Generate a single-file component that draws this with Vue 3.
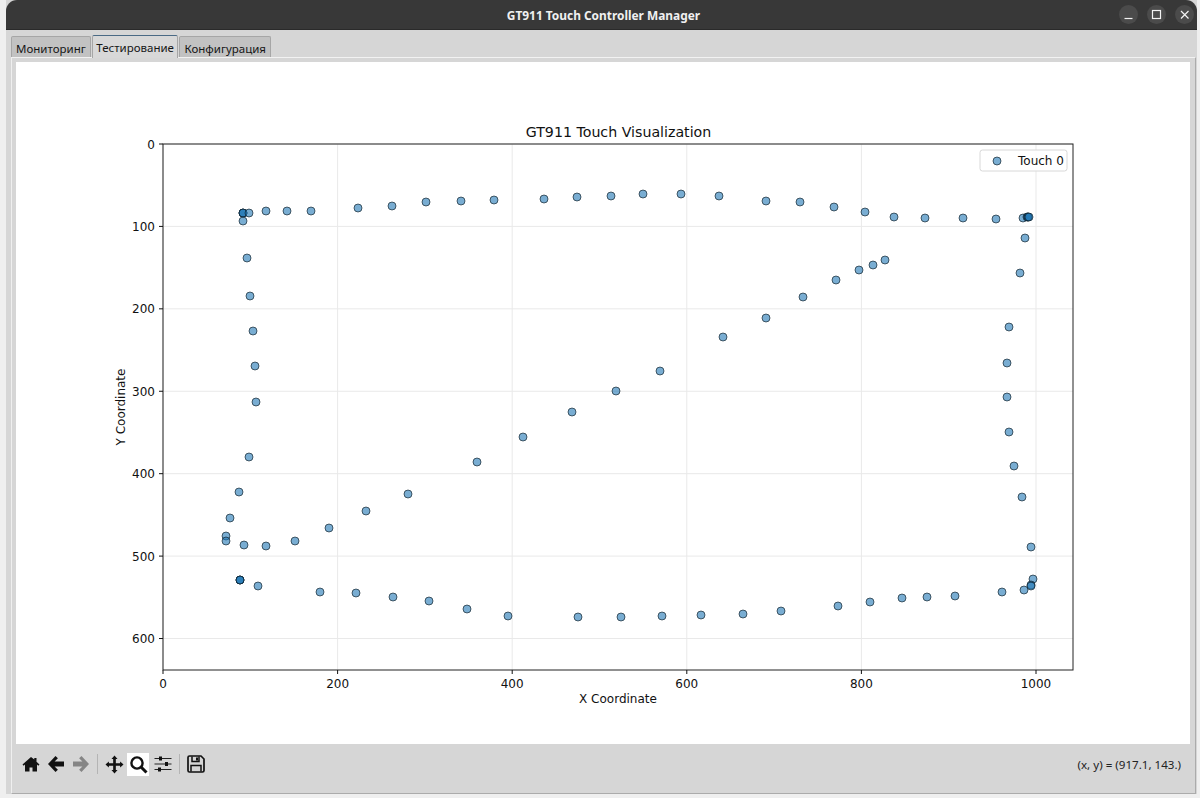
<template>
  <div class="desktop">
    <div class="window">
      <!-- Title bar -->
      <header class="titlebar">
        <span class="title">GT911 Touch Controller Manager</span>
        <div class="win-buttons">
          <button class="win-btn" aria-label="minimize">
            <svg width="12" height="12" viewBox="0 0 12 12"><path d="M1.5 9.5h8" stroke="#f2f2f2" stroke-width="1.2" /></svg>
          </button>
          <button class="win-btn" aria-label="maximize">
            <svg width="12" height="12" viewBox="0 0 12 12"><rect x="1.5" y="1.5" width="8" height="8" fill="none" stroke="#f2f2f2" stroke-width="1.2" /></svg>
          </button>
          <button class="win-btn" aria-label="close">
            <svg width="12" height="12" viewBox="0 0 12 12"><path d="M2 2l7.5 7.5M9.5 2L2 9.5" stroke="#f2f2f2" stroke-width="1.2" /></svg>
          </button>
        </div>
      </header>

      <div class="body">
        <nav class="tabs">
          <div v-for="tab in tabs" :key="tab" class="tab" :class="{ active: tab === activeTab }">{{ tab }}</div>
        </nav>

        <section class="pane">
          <div class="canvas">
            <!-- viewBox keeps plot coordinates in window pixels -->
            <svg class="plot" viewBox="16 62 1175 682" width="1175" height="682">
              <text x="618.5" y="137" class="plot-title" text-anchor="middle">GT911 Touch Visualization</text>

              <line v-for="t in xTicks" :key="'gx'+t" :x1="xPos(t)" :x2="xPos(t)" :y1="axes.top" :y2="axes.bottom" class="grid" />
              <line v-for="t in yTicks" :key="'gy'+t" :x1="axes.left" :x2="axes.right" :y1="yPos(t)" :y2="yPos(t)" class="grid" />

              <circle v-for="(p, i) in points" :key="'p'+i" :cx="p[0]" :cy="p[1]" r="4" class="dot" />

              <rect :x="axes.left" :y="axes.top" :width="axes.right - axes.left" :height="axes.bottom - axes.top" class="frame" />

              <g v-for="t in xTicks" :key="'tx'+t">
                <line :x1="xPos(t)" :x2="xPos(t)" :y1="axes.bottom" :y2="axes.bottom + 4" class="tick" />
                <text :x="xPos(t)" :y="axes.bottom + 18" class="tick-label" text-anchor="middle">{{ t }}</text>
              </g>
              <g v-for="t in yTicks" :key="'ty'+t">
                <line :x1="axes.left - 4" :x2="axes.left" :y1="yPos(t)" :y2="yPos(t)" class="tick" />
                <text :x="axes.left - 8" :y="yPos(t) + 4.5" class="tick-label" text-anchor="end">{{ t }}</text>
              </g>

              <text x="618" y="703" class="axis-label" text-anchor="middle">X Coordinate</text>
              <text class="axis-label" text-anchor="middle" transform="translate(125 407) rotate(-90)">Y Coordinate</text>

              <!-- Legend -->
              <rect x="980" y="150" width="87" height="21" rx="2.5" class="legend-box" />
              <circle cx="997" cy="161" r="4" class="dot" />
              <text x="1018" y="164.5" class="tick-label">Touch 0</text>
            </svg>
          </div>

          <footer class="toolbar">
            <div class="tools">
              <svg class="tool" width="18" height="18" viewBox="0 0 18 18"><path d="M9 2L0.5 9.5l1.2 1.3L3 9.6V16.5h4.5v-4h3v4H15V9.6l1.3 1.2 1.2-1.3-3-2.7V3h-2.2v1.6z" fill="#111" /></svg>
              <svg class="tool" width="18" height="18" viewBox="0 0 18 18"><path d="M8.5 1L1 9l7.5 8 2.4-2.2L7.6 11.6H17V6.4H7.6l3.3-3.2z" fill="#111" /></svg>
              <svg class="tool" width="18" height="18" viewBox="0 0 18 18"><path d="M9.5 1L17 9l-7.5 8-2.4-2.2 3.3-3.2H1V6.4h9.4L7.1 3.2z" fill="#858585" /></svg>
              <span class="sep"></span>
              <svg class="tool" width="19" height="19" viewBox="0 0 20 20"><path d="M10 0.5l3.2 3.6H11.4V8.6h4.5V6.8l3.6 3.2-3.6 3.2v-1.8h-4.5v4.5h1.8L10 19.5l-3.2-3.6h1.8v-4.5H4.1v1.8L0.5 10l3.6-3.2v1.8h4.5V4.1H6.8z" fill="#111" /></svg>
              <span class="tool-active">
                <svg width="19" height="19" viewBox="0 0 19 19"><circle cx="8" cy="8" r="5.6" fill="none" stroke="#111" stroke-width="2.4" /><path d="M12 12l5.5 5.5" stroke="#111" stroke-width="3" /></svg>
              </span>
              <svg class="tool" width="18" height="18" viewBox="0 0 18 18">
                <path d="M0.5 3.5h17M0.5 9h17M0.5 14.5h17" stroke="#222" stroke-width="1.2" />
                <rect x="5" y="1.5" width="3" height="4" fill="#111" /><rect x="11" y="7" width="3" height="4" fill="#111" /><rect x="4" y="12.5" width="3" height="4" fill="#111" />
              </svg>
              <span class="sep"></span>
              <svg class="tool" width="18" height="18" viewBox="0 0 18 18">
                <path d="M2.5 1H14l3 3v11.5a1.5 1.5 0 0 1-1.5 1.5h-13A1.5 1.5 0 0 1 1 15.5v-13A1.5 1.5 0 0 1 2.5 1z" fill="none" stroke="#111" stroke-width="1.7" />
                <path d="M5 1.5v5h7v-5M4 16.5v-6h10v6" fill="none" stroke="#111" stroke-width="1.5" />
                <rect x="9" y="2.5" width="2" height="3" fill="#111" />
              </svg>
            </div>
            <span class="coords">(x, y) = (917.1, 143.)</span>
          </footer>
        </section>
      </div>
    </div>
  </div>
</template>

<script setup>
const tabs = ['Мониторинг', 'Тестирование', 'Конфигурация']
const activeTab = 'Тестирование'

const axes = { left: 163, right: 1073, top: 144, bottom: 670 }
const xTicks = [0, 200, 400, 600, 800, 1000]
const yTicks = [0, 100, 200, 300, 400, 500, 600]

const xPos = (v) => axes.left + v * 0.873
const yPos = (v) => axes.top + v * 0.8242

// Touch samples, already in window pixels
const points = [
  [243, 213], [243, 213], [243, 213], [249, 213], [243, 221], [266, 211], [287, 211], [311, 211],
  [358, 208], [392, 206], [426, 202], [461, 201], [494, 200], [544, 199], [577, 197], [611, 196],
  [643, 194], [681, 194], [719, 196], [766, 201], [800, 202], [834, 207], [865, 212], [894, 217],
  [925, 218], [963, 218], [996, 219], [1023, 218], [1027, 217], [1028, 217], [1028, 217], [1029, 217],
  [1025, 238], [1020, 273], [1009, 327], [1007, 363], [1007, 397], [1009, 432], [1014, 466], [1022, 497],
  [1031, 547], [1033, 579], [1031, 585], [1031, 586], [1024, 590], [1002, 592], [955, 596], [927, 597],
  [902, 598], [870, 602], [838, 606], [781, 611], [743, 614], [701, 615], [662, 616], [621, 617],
  [578, 617], [508, 616], [467, 609], [429, 601], [393, 597], [356, 593],
  [320, 592], [258, 586], [240, 580], [240, 580], [240, 580],
  [247, 258], [250, 296], [253, 331], [255, 366], [256, 402], [249, 457], [239, 492], [230, 518],
  [226, 536], [226, 541], [244, 545], [266, 546], [295, 541], [329, 528], [366, 511], [408, 494],
  [477, 462], [523, 437], [572, 412], [616, 391], [660, 371], [723, 337], [766, 318], [803, 297],
  [836, 280], [859, 270], [873, 265], [885, 260]
]
</script>

<style>
html, body {
  margin: 0;
  background: #efefef;
}
</style>

<style scoped>
.desktop {
  width: 1200px;
  height: 798px;
  padding: 0 3px 4px 6px;
  box-sizing: border-box;
  overflow: hidden;
}

.window {
  height: 100%;
  display: flex;
  flex-direction: column;
  background: #d6d6d6;
}

.titlebar {
  height: 30px;
  flex: none;
  padding-left: 4px;
  background: #383838;
  border-radius: 11px 11px 0 0;
  border-bottom: 1px solid #2a2a2a;
  box-sizing: border-box;
  position: relative;
  display: flex;
  align-items: center;
  justify-content: center;
}

.title {
  font-family: "Noto Sans", sans-serif;
  font-weight: 700;
  font-size: 11.9px;
  color: #f0f0f0;
}

.win-buttons {
  position: absolute;
  right: 3px;
  top: 5px;
  display: flex;
  gap: 9px;
}

.win-btn {
  width: 19px;
  height: 19px;
  padding: 0;
  border: none;
  border-radius: 50%;
  background: #4b4b4b;
  display: flex;
  align-items: center;
  justify-content: center;
}

.body {
  flex: 1;
  display: flex;
  flex-direction: column;
  padding: 5px 0 0 5px;
  min-height: 0;
}

.tabs {
  height: 22px;
  display: flex;
  align-items: flex-end;
  font-family: "Noto Sans", sans-serif;
  font-size: 11.5px;
  color: #161616;
}

.tab {
  height: 21px;
  padding: 0 4px;
  margin-right: 1px;
  line-height: 23px;
  background: #c2c2c2;
  border: 1px solid #a6a6a6;
  border-bottom: none;
  border-radius: 2px 2px 0 0;
  box-sizing: border-box;
}

.tab.active {
  height: 23px;
  margin-bottom: -1px;
  padding: 0 3.5px;
  background: #d8d8d8;
  border-top: 1px solid #4a6a85;
  position: relative;
  z-index: 1;
}

.pane {
  flex: 1;
  min-height: 0;
  display: flex;
  flex-direction: column;
  margin-right: 1px;
  padding: 4px 5px 0 4px;
  border: 1px solid #ababab;
  border-top: 1px solid #f2f2f2;
  border-left-color: #efefef;
  background: #d6d6d6;
}

.canvas {
  height: 682px;
  flex: none;
  background: #fff;
}

.plot {
  display: block;
  font-family: "DejaVu Sans", sans-serif;
}

.plot-title {
  font-size: 14.2px;
  fill: #111;
}

.tick-label,
.axis-label {
  font-size: 12px;
  fill: #111;
}

.grid {
  stroke: #e9e9e9;
  stroke-width: 1;
}

.tick {
  stroke: #111;
  stroke-width: 1;
}

.frame {
  fill: none;
  stroke: #222;
  stroke-width: 1;
}

.dot {
  fill: #1f77b4;
  fill-opacity: 0.6;
  stroke: #0b1a24;
  stroke-opacity: 0.65;
  stroke-width: 1;
}

.legend-box {
  fill: #fff;
  fill-opacity: 0.85;
  stroke: #d8d8d8;
  stroke-width: 1;
}

.toolbar {
  flex: 1;
  display: flex;
  align-items: center;
  justify-content: space-between;
  padding: 0 9px 9px 6px;
}

.tools {
  display: flex;
  align-items: center;
  gap: 7px;
}

.tool {
  display: block;
}

.tool-active {
  width: 22px;
  height: 23px;
  background: #fff;
  display: flex;
  align-items: center;
  justify-content: center;
  margin: 0 -2px 0 -4px;
}

.sep {
  width: 1px;
  height: 20px;
  background: #b4b4b4;
}

.coords {
  font-family: "Noto Sans", sans-serif;
  font-size: 11.6px;
  color: #222;
}
</style>
